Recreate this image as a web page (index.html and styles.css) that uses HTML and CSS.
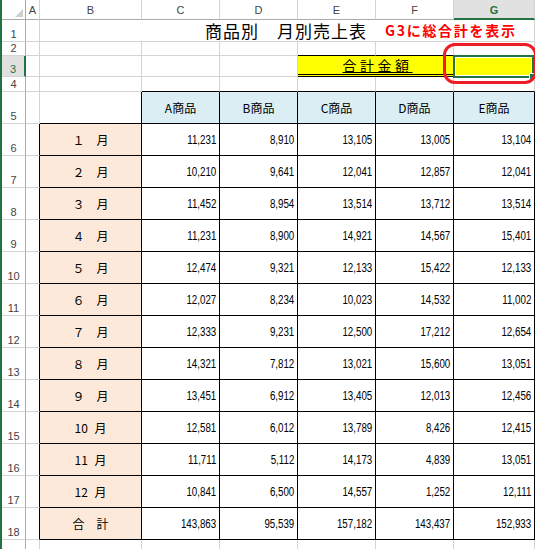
FILE: index.html
```html
<!DOCTYPE html>
<html lang="ja">
<head>
<meta charset="utf-8">
<title>商品別 月別売上表</title>
<link rel="stylesheet" href="styles.css">
</head>
<body>
<div class="sheet">
  <!-- column headers -->
  <div class="corner"><span class="tri"></span></div>
  <div class="ch">A</div><div class="ch">B</div><div class="ch">C</div><div class="ch">D</div><div class="ch">E</div><div class="ch">F</div><div class="ch sel">G</div>

  <!-- row 1 -->
  <div class="rh">1</div><div class="c"></div>
  <div class="c span6 titlecell"><span class="title">商品別　月別売上表</span><span class="note">G3に総合計を表示</span></div>

  <!-- row 2 -->
  <div class="rh">2</div><div class="c"></div><div class="c"></div><div class="c"></div><div class="c"></div><div class="c bb"></div><div class="c bb"></div><div class="c"></div>

  <!-- row 3 -->
  <div class="rh sel">3</div><div class="c"></div><div class="c"></div><div class="c"></div><div class="c"></div>
  <div class="c total">合計金額</div>
  <div class="c g3"><span class="selbox"></span><span class="handle"></span></div>

  <!-- row 4 -->
  <div class="rh">4</div><div class="c"></div><div class="c"></div><div class="c bb"></div><div class="c bb"></div><div class="c bb"></div><div class="c bb"></div><div class="c bb"></div>

  <!-- row 5 -->
  <div class="rh">5</div><div class="c"></div><div class="c br bb"></div>
  <div class="c t hd">A商品</div><div class="c t hd">B商品</div><div class="c t hd">C商品</div><div class="c t hd">D商品</div><div class="c t hd">E商品</div>

  <div class="rh">6</div><div class="c br"></div><div class="c t mon">１　月</div>
  <div class="c t num"><span>11,231</span></div><div class="c t num"><span>8,910</span></div><div class="c t num"><span>13,105</span></div><div class="c t num"><span>13,005</span></div><div class="c t num"><span>13,104</span></div>

  <div class="rh">7</div><div class="c br"></div><div class="c t mon">２　月</div>
  <div class="c t num"><span>10,210</span></div><div class="c t num"><span>9,641</span></div><div class="c t num"><span>12,041</span></div><div class="c t num"><span>12,857</span></div><div class="c t num"><span>12,041</span></div>

  <div class="rh">8</div><div class="c br"></div><div class="c t mon">３　月</div>
  <div class="c t num"><span>11,452</span></div><div class="c t num"><span>8,954</span></div><div class="c t num"><span>13,514</span></div><div class="c t num"><span>13,712</span></div><div class="c t num"><span>13,514</span></div>

  <div class="rh">9</div><div class="c br"></div><div class="c t mon">４　月</div>
  <div class="c t num"><span>11,231</span></div><div class="c t num"><span>8,900</span></div><div class="c t num"><span>14,921</span></div><div class="c t num"><span>14,567</span></div><div class="c t num"><span>15,401</span></div>

  <div class="rh">10</div><div class="c br"></div><div class="c t mon">５　月</div>
  <div class="c t num"><span>12,474</span></div><div class="c t num"><span>9,321</span></div><div class="c t num"><span>12,133</span></div><div class="c t num"><span>15,422</span></div><div class="c t num"><span>12,133</span></div>

  <div class="rh">11</div><div class="c br"></div><div class="c t mon">６　月</div>
  <div class="c t num"><span>12,027</span></div><div class="c t num"><span>8,234</span></div><div class="c t num"><span>10,023</span></div><div class="c t num"><span>14,532</span></div><div class="c t num"><span>11,002</span></div>

  <div class="rh">12</div><div class="c br"></div><div class="c t mon">７　月</div>
  <div class="c t num"><span>12,333</span></div><div class="c t num"><span>9,231</span></div><div class="c t num"><span>12,500</span></div><div class="c t num"><span>17,212</span></div><div class="c t num"><span>12,654</span></div>

  <div class="rh">13</div><div class="c br"></div><div class="c t mon">８　月</div>
  <div class="c t num"><span>14,321</span></div><div class="c t num"><span>7,812</span></div><div class="c t num"><span>13,021</span></div><div class="c t num"><span>15,600</span></div><div class="c t num"><span>13,051</span></div>

  <div class="rh">14</div><div class="c br"></div><div class="c t mon">９　月</div>
  <div class="c t num"><span>13,451</span></div><div class="c t num"><span>6,912</span></div><div class="c t num"><span>13,405</span></div><div class="c t num"><span>12,013</span></div><div class="c t num"><span>12,456</span></div>

  <div class="rh">15</div><div class="c br"></div><div class="c t mon">10 月</div>
  <div class="c t num"><span>12,581</span></div><div class="c t num"><span>6,012</span></div><div class="c t num"><span>13,789</span></div><div class="c t num"><span>8,426</span></div><div class="c t num"><span>12,415</span></div>

  <div class="rh">16</div><div class="c br"></div><div class="c t mon">11 月</div>
  <div class="c t num"><span>11,711</span></div><div class="c t num"><span>5,112</span></div><div class="c t num"><span>14,173</span></div><div class="c t num"><span>4,839</span></div><div class="c t num"><span>13,051</span></div>

  <div class="rh">17</div><div class="c br"></div><div class="c t mon">12 月</div>
  <div class="c t num"><span>10,841</span></div><div class="c t num"><span>6,500</span></div><div class="c t num"><span>14,557</span></div><div class="c t num"><span>1,252</span></div><div class="c t num"><span>12,111</span></div>

  <div class="rh">18</div><div class="c br"></div><div class="c t mon">合　計</div>
  <div class="c t num"><span>143,863</span></div><div class="c t num"><span>95,539</span></div><div class="c t num"><span>157,182</span></div><div class="c t num"><span>143,437</span></div><div class="c t num"><span>152,933</span></div>

  <!-- row 19 -->
  <div class="rh">19</div><div class="c"></div><div class="c"></div><div class="c"></div><div class="c"></div><div class="c"></div><div class="c"></div><div class="c"></div>

  <span class="oval"></span>
</div>
</body>
</html>
```

FILE: styles.css
```css
html, body {
  margin: 0;
  padding: 0;
  background: #fff;
  overflow: hidden;
}

body {
  width: 537px;
  height: 549px;
  font-family: "Noto Sans CJK JP", "Liberation Sans", sans-serif;
  color: #000;
}

.sheet {
  position: relative;
  display: grid;
  grid-template-columns: 24px 14px 102px 78px 78px 78px 78px 81px;
  grid-template-rows: 20px 22px 14px 21px 15px repeat(15, 32px);
  width: 535px;
  height: 549px;
  box-sizing: border-box;
  border-left: 2px solid #217346;
  overflow: hidden;
}

.sheet > div {
  box-sizing: border-box;
  border-right: 1px solid #d4d4d4;
  border-bottom: 1px solid #d4d4d4;
  min-width: 0;
}

/* headers */
.corner {
  display: flex;
  justify-content: flex-end;
  align-items: flex-end;
  padding: 0 2px 2px 0;
  border-right-color: #ababab !important;
  border-bottom-color: #ababab !important;
}

.tri {
  width: 0;
  height: 0;
  border-left: 8px solid transparent;
  border-bottom: 8px solid #cfcfcf;
}

.ch {
  display: flex;
  justify-content: center;
  align-items: flex-end;
  padding-bottom: 3px;
  font-family: "Liberation Sans", sans-serif;
  font-size: 11px;
  line-height: 1;
  color: #444;
  border-bottom-color: #ababab !important;
}

.ch.sel {
  background: #e1e1e1;
  border-bottom: 2px solid #217346 !important;
  color: #217346;
  font-weight: 700;
  padding-bottom: 2px;
}

.rh {
  display: flex;
  justify-content: center;
  align-items: flex-end;
  padding-bottom: 1px;
  font-family: "Liberation Sans", sans-serif;
  font-size: 11px;
  line-height: 1;
  color: #444;
  border-right-color: #ababab !important;
}

.rh.sel {
  background: #e1e1e1;
  border-right: 2px solid #217346 !important;
  color: #217346;
}

/* borders */
.bb { border-bottom-color: #000 !important; }
.br { border-right-color: #000 !important; }
.t {
  border-right-color: #000 !important;
  border-bottom-color: #000 !important;
}

/* title row */
.span6 { grid-column: span 6; }

.titlecell {
  display: flex;
  align-items: flex-end;
  padding-left: 165px;
  white-space: nowrap;
}

.title {
  width: 180px;
  flex: none;
  font-size: 17px;
  letter-spacing: 1px;
  line-height: 1;
  padding-bottom: 2px;
}

.note {
  flex: none;
  color: #ff0000;
  font-weight: 700;
  font-size: 14px;
  letter-spacing: 1.7px;
  line-height: 1;
  padding-bottom: 4px;
}

/* total label and G3 */
.total {
  grid-column: span 2;
  background: #ffff00;
  border-bottom: 3px double #000 !important;
  display: flex;
  justify-content: center;
  align-items: center;
  font-size: 14px;
  letter-spacing: 3.5px;
  padding-left: 4px;
  text-decoration: underline;
  text-underline-offset: 1px;
  white-space: nowrap;
}

.g3 {
  position: relative;
  background: #ffff00;
}

.selbox {
  position: absolute;
  left: -1px;
  top: -1px;
  width: 81px;
  height: 23px;
  box-sizing: border-box;
  border: 2px solid #217346;
  box-shadow: inset 0 0 0 1px #fff;
  z-index: 2;
}

.handle {
  position: absolute;
  left: 75px;
  top: 17px;
  width: 7px;
  height: 7px;
  box-sizing: border-box;
  background: #217346;
  border: 1px solid #fff;
  z-index: 3;
}

/* table cells */
.hd {
  background: #daeef3;
  display: flex;
  justify-content: center;
  align-items: center;
  font-size: 12px;
  white-space: nowrap;
}

.mon {
  background: #fde9d9;
  display: flex;
  justify-content: center;
  align-items: center;
  font-size: 12px;
  white-space: pre;
  word-spacing: 4px;
}

.num {
  display: flex;
  justify-content: flex-end;
  align-items: center;
  padding-right: 3px;
  font-family: "Liberation Sans", sans-serif;
  font-size: 12.5px;
  white-space: nowrap;
}

.num span {
  display: inline-block;
  transform: scaleX(0.78);
  transform-origin: right center;
}

/* annotation */
.oval {
  position: absolute;
  left: 441px;
  top: 43px;
  width: 94px;
  height: 41px;
  box-sizing: border-box;
  border: 3px solid #ee1c25;
  border-radius: 12px;
  z-index: 4;
  pointer-events: none;
}
```
